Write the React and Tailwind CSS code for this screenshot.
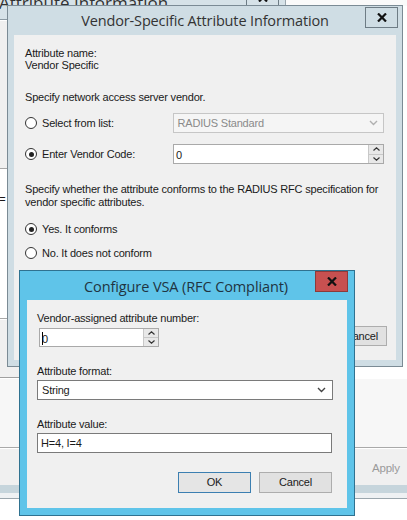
import React from 'react';

const body = { fontFamily: '"Liberation Sans", Arial, sans-serif' };
const title = { fontFamily: '"Open Sans", "Noto Sans", sans-serif' };

const Radio = ({ checked, label, className = '' }) => (
  <div className={`flex items-center gap-[5px] h-[14px] ${className}`}>
    <span className="w-[12px] h-[12px] rounded-full border border-[#333] bg-white flex items-center justify-center shrink-0">
      {checked && <span className="w-[5px] h-[5px] rounded-full bg-[#222]" />}
    </span>
    <span>{label}</span>
  </div>
);

const Chevron = ({ color = '#444' }) => (
  <svg width="9" height="6" viewBox="0 0 9 6">
    <path d="M1 1 L4.5 4.5 L8 1" fill="none" stroke={color} strokeWidth="1.4" />
  </svg>
);

const Spinner = () => (
  <div className="flex flex-col w-[15px] h-full border-l border-[#c8c8c8]">
    <div className="flex-1 flex items-center justify-center bg-[#e8e8e8] border-b border-[#c8c8c8]">
      <svg width="7" height="4" viewBox="0 0 7 4"><path d="M0.5 3.5 L3.5 0.8 L6.5 3.5" fill="none" stroke="#333" strokeWidth="1.2" /></svg>
    </div>
    <div className="flex-1 flex items-center justify-center bg-[#e8e8e8]">
      <svg width="7" height="4" viewBox="0 0 7 4"><path d="M0.5 0.5 L3.5 3.2 L6.5 0.5" fill="none" stroke="#333" strokeWidth="1.2" /></svg>
    </div>
  </div>
);

const CloseGlyph = () => (
  <svg width="10" height="9" viewBox="0 0 10 9">
    <path d="M1 0.5 L9 8.5 M9 0.5 L1 8.5" stroke="#111" strokeWidth="2.2" />
  </svg>
);

export default function App() {
  return (
    <div className="relative w-[407px] h-[520px] overflow-hidden bg-white text-[11px] tracking-[-0.2px] text-[#1a1a1a]" style={body}>
      {/* back window: Attribute Information */}
      <div className="absolute left-[-20px] top-[-24px] w-[306px] h-[44px] bg-[#d6e2e8] border-b border-[#8c9aa3]">
        <div className="absolute left-[19px] top-[18px] text-[17px] tracking-normal text-[#333] leading-none" style={title}>Attribute Information</div>
        <div className="absolute left-[266px] top-[-2px] w-[33px] h-[32px] border border-[#6e7c85] flex items-end justify-center pb-[3px]">
          <CloseGlyph />
        </div>
      </div>
      <div className="absolute left-[285px] top-0 w-[122px] h-[6px] border-l border-[#9aa6ad] bg-[#fafafa]" />

      {/* back property sheet strip on left */}
      <div className="absolute left-0 top-[21px] w-[20px] h-[147px] bg-[#f0f0f0]" />
      <div className="absolute left-0 top-[168px] w-[20px] h-[151px] bg-white border-t border-b border-[#a8a8a8]">
        <div className="absolute left-[-3px] top-[22px]">l=</div>
      </div>
      <div className="absolute left-0 top-[320px] w-[20px] h-[58px] bg-[#f0f0f0] border-b border-[#a0a0a0]" />

      {/* lower back region with Apply */}
      <div className="absolute left-0 top-[379px] w-[407px] h-[69px] bg-[#f7f7f7] border-b border-[#a9a9a9]" />
      <div className="absolute left-0 top-[449px] w-[407px] h-[36px] bg-[#f0f0f0]">
        <div className="absolute left-[372px] top-[11px] text-[#9a9a9a] text-[11.5px]">Apply</div>
      </div>
      <div className="absolute left-0 top-[485px] w-[407px] h-[8px] bg-[#c6d5dc]" />
      <div className="absolute left-0 top-[493px] w-[407px] h-[6px] bg-[#eef1f3] border-b border-[#9aa6ad]" />

      {/* Vendor-Specific Attribute Information */}
      <div className="absolute left-[7px] top-[5px] w-[396px] h-[362px] bg-[#cfdde4] border border-[#7b8b95] flex flex-col">
        <div className="relative h-[29px] shrink-0 flex items-center justify-center">
          <span className="text-[14.5px] tracking-[-0.15px] text-[#333] leading-none mt-[2px]" style={title}>Vendor-Specific Attribute Information</span>
          <div className="absolute right-[4px] top-[1px] w-[33px] h-[21px] border border-[#6e7c85] flex items-center justify-center">
            <CloseGlyph />
          </div>
        </div>
        <div className="relative mx-[6px] mb-[6px] flex-1 bg-[#f0f0f0] pl-[11px] pr-[12px]">
          <div className="mt-[12px] leading-[12px]">
            <div>Attribute name:</div>
            <div>Vendor Specific</div>
          </div>
          <div className="mt-[20px] leading-[13px]">Specify network access server vendor.</div>
          <div className="mt-[9px] flex items-center h-[20px]">
            <Radio label="Select from list:" className="w-[148px]" />
            <div className="w-[212px] h-[20px] border border-[#c6c6c6] bg-[#f5f5f5] flex items-center justify-between pl-[4px] pr-[5px] text-[#8a8a8a]">
              <span>RADIUS Standard</span>
              <Chevron color="#b0b0b0" />
            </div>
          </div>
          <div className="mt-[11px] flex items-center h-[20px]">
            <Radio checked label="Enter Vendor Code:" className="w-[148px]" />
            <div className="w-[211px] h-[20px] border border-[#a9a9a9] bg-white flex items-stretch">
              <span className="flex-1 pl-[2px] pt-[2px]">0</span>
              <Spinner />
            </div>
          </div>
          <div className="mt-[19px] leading-[13px] whitespace-nowrap">
            <div>Specify whether the attribute conforms to the RADIUS RFC specification for</div>
            <div>vendor specific attributes.</div>
          </div>
          <Radio checked label="Yes. It conforms" className="mt-[13px]" />
          <Radio label="No. It does not conform" className="mt-[10px]" />
          <div className="absolute left-[336px] top-[291px] w-[37px] h-[20px] border border-[#adadad] bg-[#e1e1e1] flex items-center justify-end pr-[8px]">
            Cancel
          </div>
        </div>
      </div>

      {/* Configure VSA (RFC Compliant) */}
      <div className="absolute left-[19px] top-[270px] w-[336px] h-[246px] bg-[#5fc4e9] border border-[#2f7290] flex flex-col">
        <div className="relative h-[29px] shrink-0 flex items-center justify-center">
          <span className="text-[14.5px] tracking-[-0.1px] text-[#1f3442] leading-none mt-[4px] mr-[2px]" style={title}>Configure VSA (RFC Compliant)</span>
          <div className="absolute right-[6px] top-0 w-[33px] h-[21px] bg-[#c75050] border border-[#8d3a3a] flex items-center justify-center">
            <CloseGlyph />
          </div>
        </div>
        <div className="mx-[7px] mb-[7px] flex-1 bg-[#f0f0f0] px-[10px] flex flex-col">
          <div className="mt-[12px] leading-[13px]">Vendor-assigned attribute number:</div>
          <div className="mt-[3px] ml-[2px] w-[120px] h-[19px] border border-[#a9a9a9] bg-white flex items-stretch">
            <span className="flex-1 pl-[2px] pt-[2px] flex items-start">
              <span className="w-px h-[13px] bg-black mt-[1px]" />
              <span className="-ml-[1px]">0</span>
            </span>
            <Spinner />
          </div>
          <div className="mt-[18px] leading-[13px]">Attribute format:</div>
          <div className="mt-[2px] w-[296px] h-[20px] border border-[#7a7a7a] bg-white flex items-center justify-between pl-[4px] pr-[6px]">
            <span>String</span>
            <Chevron color="#444" />
          </div>
          <div className="mt-[18px] leading-[13px]">Attribute value:</div>
          <div className="mt-[2px] w-[295px] h-[20px] border border-[#7a7a7a] bg-white flex items-center pl-[3px]">
            H=4, I=4
          </div>
          <div className="mt-[19px] flex justify-end gap-[8px] pr-[5px]">
            <div className="w-[73px] h-[21px] border border-[#3c7fb1] bg-[#e5e5e5] flex items-center justify-center">OK</div>
            <div className="w-[73px] h-[21px] border border-[#adadad] bg-[#e1e1e1] flex items-center justify-center">Cancel</div>
          </div>
        </div>
      </div>
    </div>
  );
}
